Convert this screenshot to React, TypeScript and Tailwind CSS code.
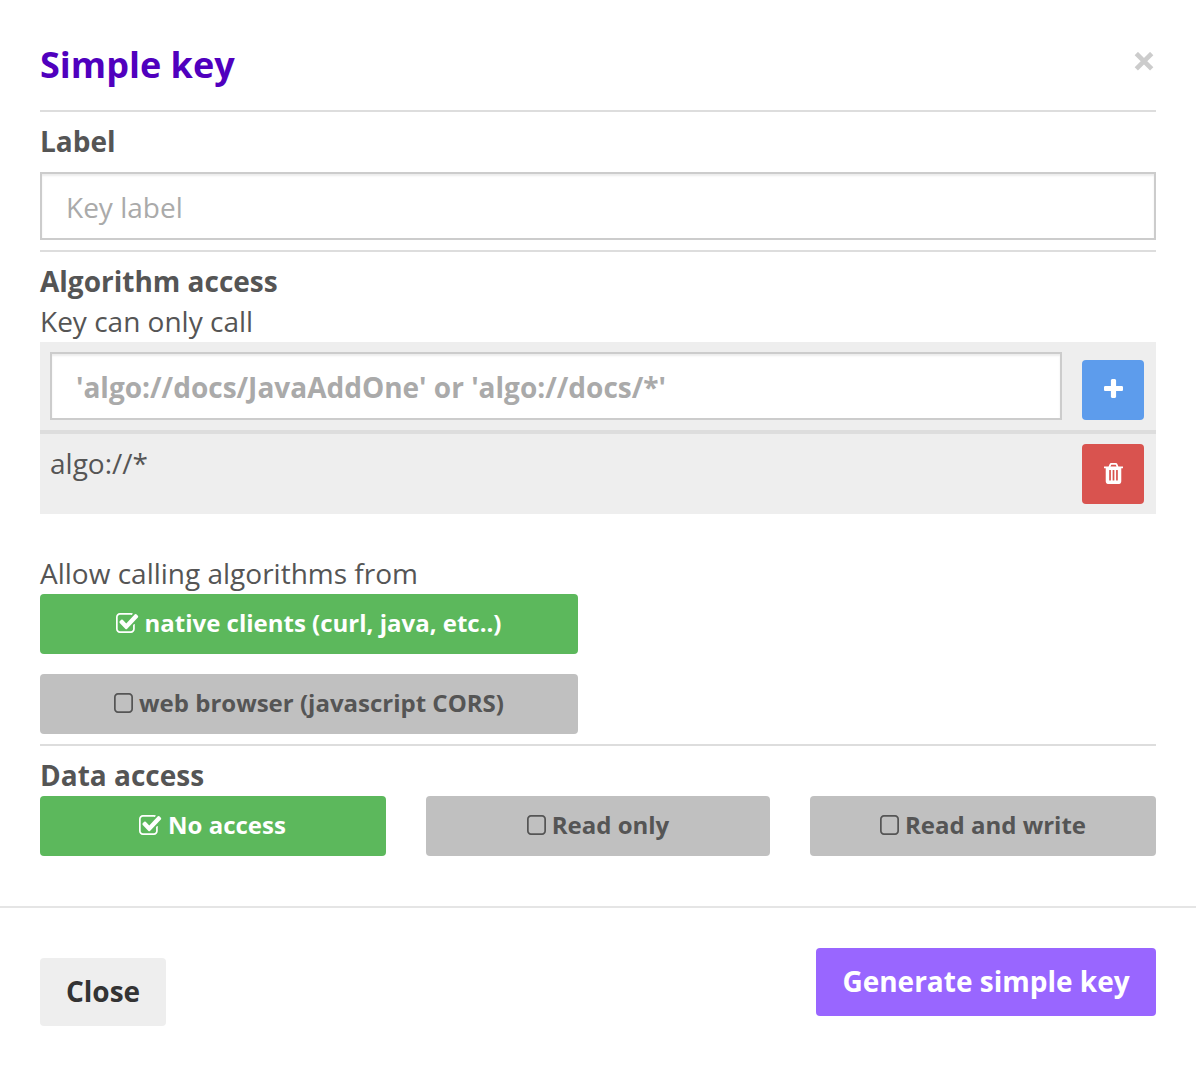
const Check = () => (
  <svg className="mr-[6px] mb-[6px] inline-block h-[20px] w-[23px] align-middle" viewBox="0 0 1725 1408" preserveAspectRatio="none" fill="currentColor">
    <path d="M1408 802v318q0 119-84.500 203.500T1120 1408H288q-119 0-203.500-84.500T0 1120V288Q0 169 84.500 84.500T288 0h832q63 0 117 25 15 7 18 23 3 17-9 29l-49 49q-10 10-23 10-3 0-9-2-23-6-45-6H288q-66 0-113 47t-47 113v832q0 66 47 113t113 47h832q66 0 113-47t47-113V866q0-13 9-22l64-64q10-10 23-10 6 0 12 3 20 8 20 29zm231-489l-814 814q-24 24-57 24t-57-24l-430-430q-24-24-24-57t24-57l110-110q24-24 57-24t57 24l263 263 647-647q24-24 57-24t57 24l110 110q24 24 24 57t-24 57z" />
  </svg>
);
const Square = () => (
  <svg className="mr-[6px] mb-[6px] inline-block h-[20px] w-[19px] align-middle" viewBox="0 0 1408 1408" preserveAspectRatio="none" fill="currentColor">
    <path d="M1120 128H288q-66 0-113 47t-47 113v832q0 66 47 113t113 47h832q66 0 113-47t47-113V288q0-66-47-113t-113-47zm288 160v832q0 119-84.500 203.500T1120 1408H288q-119 0-203.500-84.500T0 1120V288Q0 169 84.500 84.500T288 0h832q119 0 203.500 84.500T1408 288z" />
  </svg>
);
const Trash = () => (
  <svg className="mb-[2px] ml-[1px] h-[21px] w-[19px]" viewBox="0 0 1408 1536" preserveAspectRatio="none" fill="currentColor">
    <path d="M512 1248V544q0-14-9-23t-23-9h-64q-14 0-23 9t-9 23v704q0 14 9 23t23 9h64q14 0 23-9t9-23zm256 0V544q0-14-9-23t-23-9h-64q-14 0-23 9t-9 23v704q0 14 9 23t23 9h64q14 0 23-9t9-23zm256 0V544q0-14-9-23t-23-9h-64q-14 0-23 9t-9 23v704q0 14 9 23t23 9h64q14 0 23-9t9-23zM480 256h448l-48-117q-7-9-17-11H546q-10 2-17 11zm928 32v64q0 14-9 23t-23 9h-96v948q0 83-47 143.500t-113 60.500H288q-66 0-113-58.500T128 1336V384H32q-14 0-23-9t-9-23v-64q0-14 9-23t23-9h309l70-167q15-37 54-63t79-26h320q40 0 79 26t54 63l70 167h309q14 0 23 9t9 23z" />
  </svg>
);
const Plus = () => (
  <svg className="mb-[3px] ml-[1px] h-[19px] w-[19px]" viewBox="0 0 1408 1408" fill="currentColor">
    <path d="M1408 608v192q0 40-28 68t-68 28H896v416q0 40-28 68t-68 28H608q-40 0-68-28t-28-68V896H96q-40 0-68-28T0 800V608q0-40 28-68t68-28h416V96q0-40 28-68t68-28h192q40 0 68 28t28 68v416h416q40 0 68 28t28 68z" />
  </svg>
);

function Option({ label, on }: { label: string; on?: boolean }) {
  return (
    <button className={`h-[60px] w-full rounded-[4px] pb-[2px] text-[24px] leading-[40px] font-bold ${on ? "bg-[#5cb85c] pr-[1px] text-white" : "bg-[#c0c0c0] text-[#555555]"}`}>
      {on ? <Check /> : <Square />}
      {label}
    </button>
  );
}

export default function App() {
  return (
    <div className="h-[1066px] w-[1196px] bg-white font-['Open_Sans',sans-serif] text-[28px] leading-[38px] text-[#555555]">
      <div className="h-[906px] px-10">
        <header className="flex h-[110px] justify-between pt-[40px]">
          <h1 className="text-[36px] leading-[50px] font-bold text-[#5000be]">Simple key</h1>
          <button className="mt-[12px] mr-[2px] h-[20px] text-[#cccccc]" aria-label="Dismiss">
            <svg className="h-[20px] w-[20px]" viewBox="0 0 20 20" stroke="currentColor" strokeWidth="4.600"><path d="M2.300 1.500L17.700 16.900M17.700 1.500L2.300 16.900" /></svg>
          </button>
        </header>
        <section className="h-[140px] border-t-2 border-[#dddddd] pt-[10px]">
          <h2 className="pb-[2px] font-bold">Label</h2>
          <input className="mt-[10px] block h-[68px] w-full border-2 border-[#cccccc] px-6 pt-[2px] shadow-[inset_0_2px_2px_rgba(0,0,0,0.075)] placeholder:text-[#aaaaaa]" placeholder="Key label" />
        </section>
        <section className="h-[494px] border-t-2 border-[#dddddd] pt-[10px]">
          <h2 className="pb-[2px] font-bold">Algorithm access</h2>
          <p className="pb-[2px]">Key can only call</p>
          <div className="flex h-[88px] bg-[#eeeeee] pt-[10px] pr-3 pl-[10px]">
            <input className="h-[68px] w-[1012px] border-2 border-[#cccccc] bg-white px-6 pt-[2px] font-bold shadow-[inset_0_2px_2px_rgba(0,0,0,0.075)] placeholder:text-[#aaaaaa]" placeholder="'algo://docs/JavaAddOne' or 'algo://docs/*'" />
            <button className="mt-[8px] ml-5 flex h-[60px] w-[62px] items-center justify-center rounded-[4px] bg-[#5d9cec] text-white" aria-label="Add"><Plus /></button>
          </div>
          <div className="flex h-[84px] justify-between border-t-4 border-[#dddddd] bg-[#eeeeee] pt-[10px] pr-3 pl-[10px]">
            <span>algo://*</span>
            <button className="flex h-[60px] w-[62px] items-center justify-center rounded-[4px] bg-[#d9534f] text-white" aria-label="Delete"><Trash /></button>
          </div>
          <p className="mt-10 pb-[2px]">Allow calling algorithms from</p>
          <div className="flex w-[538px] flex-col gap-5">
            <Option label="native clients (curl, java, etc..)" on />
            <Option label="web browser (javascript CORS)" />
          </div>
        </section>
        <section className="border-t-2 border-[#dddddd] pt-[10px]">
          <h2 className="pb-[2px] font-bold">Data access</h2>
          <div className="grid grid-cols-[346px_344px_346px] gap-10">
            <Option label="No access" on />
            <Option label="Read only" />
            <Option label="Read and write" />
          </div>
        </section>
      </div>
      <footer className="flex h-[160px] items-start justify-between border-t-2 border-[#e5e5e5] px-10 pt-10 font-bold">
        <button className="mt-[10px] h-[68px] w-[126px] rounded-[4px] bg-[#eeeeee] pb-[2px] text-[#333333]">Close</button>
        <button className="h-[68px] w-[340px] rounded-[4px] bg-[#9966ff] pb-[2px] text-white">Generate simple key</button>
      </footer>
    </div>
  );
}
